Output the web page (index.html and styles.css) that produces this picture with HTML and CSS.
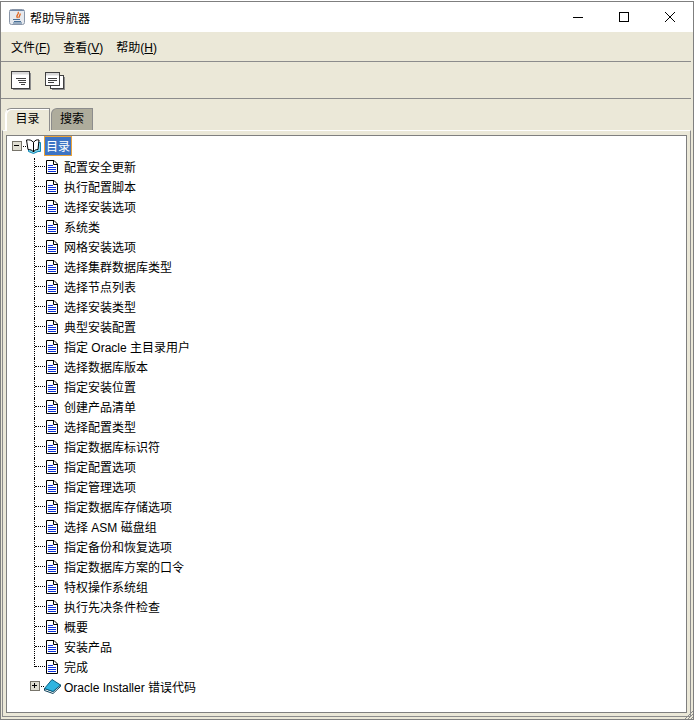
FILE: index.html
```html
<!DOCTYPE html>
<html lang="zh-CN">
<head>
    <meta charset="UTF-8">
    <title>帮助导航器</title>
    <link rel="stylesheet" href="styles.css">
</head>
<body>
    <svg class="defs" width="0" height="0">
        <symbol id="page" viewBox="0 0 12 14">
            <path d="M.5.5H8L11.5 4V13.5H.5Z" fill="#fff" stroke="#000"/>
            <path d="M7.5 .5V4.5H11.5" fill="none" stroke="#000"/>
            <path d="M2 5.500H7M2 7.500H10M2 9.500H10M2 11.500H10" stroke="#0a2fe0"/>
        </symbol>
    </svg>
    <div class="window">
        <div class="titlebar">
            <svg class="app-icon" width="16" height="16" viewBox="0 0 16 16">
                <rect x=".5" y=".5" width="15" height="15" rx="2" fill="#e6e9ee" stroke="#8a96a8"/>
                <path d="M1 1.500H15" stroke="#6f87a8"/>
                <path d="M9 3C11 5 6 6 8.500 9M11 4.500C12 6 9.500 7 10 9" fill="none" stroke="#e0641c" stroke-width="1.300"/>
                <path d="M4 10.500H11M5 12.500H12M4 14H13" fill="none" stroke="#4a7096"/>
            </svg>
            <span class="title">帮助导航器</span>
            <div class="win-buttons">
                <svg width="10" height="10" viewBox="0 0 10 10"><path d="M0 5.500H10" stroke="#000"/></svg>
                <svg width="10" height="10" viewBox="0 0 10 10"><rect x=".5" y=".5" width="9" height="9" fill="none" stroke="#000"/></svg>
                <svg width="10" height="10" viewBox="0 0 10 10"><path d="M0 0L10 10M10 0L0 10" stroke="#000"/></svg>
            </div>
        </div>
        <div class="menubar">
            <span>文件(<u>F</u>)</span>
            <span>查看(<u>V</u>)</span>
            <span>帮助(<u>H</u>)</span>
        </div>
        <div class="toolbar">
            <svg width="20" height="20" viewBox="0 0 20 20">
                <rect x="2" y="3" width="18" height="17" fill="#8d8d8d"/>
                <rect x=".5" y="1.500" width="18" height="17" fill="#fff" stroke="#404040"/>
                <path d="M1 2H18V4.500H1Z" fill="#d8d8d8"/>
                <path d="M5 8.500H15M7 10.500H15M8 12.500H15M10 14.500H14" stroke="#404040"/>
            </svg>
            <svg width="21" height="20" viewBox="0 0 21 20">
                <rect x="7" y="7" width="13" height="13" fill="#8d8d8d"/>
                <rect x="5.500" y="5.500" width="13" height="13" fill="#fff" stroke="#404040"/>
                <rect x=".5" y="2.500" width="14" height="13" fill="#fff" stroke="#404040"/>
                <path d="M1 3H14V5.500H1Z" fill="#d8d8d8"/>
                <path d="M3 8.500H12M3 10.500H12M3 12.500H9" stroke="#404040"/>
            </svg>
        </div>
        <div class="tabs">
            <div class="tab active">目录</div>
            <div class="tab">搜索</div>
        </div>
        <div class="tab-body">
            <div class="tree">
                <div class="root-row">
                    <span class="expander">
                        <svg width="10" height="10" viewBox="0 0 10 10"><rect x=".5" y=".5" width="9" height="9" fill="#e0ded2" stroke="#77746a"/><path d="M2 4.500H7" stroke="#000"/></svg>
                    </span>
                    <svg class="book-icon" width="15" height="15" viewBox="0 0 15 15">
                        <path d="M2.500 3.500V12.500L7.500 14.500L12 12.500H14.500V3.500H12" fill="#7fd6ee" stroke="#1187b5"/>
                        <path d="M7.500 3.500C6 1 3 .5 .5 1L2 10.500C4 10.500 6.500 11 7.500 13C8.500 11 10 10.500 12 10.500L13 1C11 .5 9 1 7.500 3.500Z" fill="#fff" stroke="#000"/>
                        <path d="M7.500 3.500V13" stroke="#000"/>
                    </svg>
                    <span class="selected">目录</span>
                </div>
                <ul class="children">
                    <li><svg><use href="#page"/></svg>配置安全更新</li>
                    <li><svg><use href="#page"/></svg>执行配置脚本</li>
                    <li><svg><use href="#page"/></svg>选择安装选项</li>
                    <li><svg><use href="#page"/></svg>系统类</li>
                    <li><svg><use href="#page"/></svg>网格安装选项</li>
                    <li><svg><use href="#page"/></svg>选择集群数据库类型</li>
                    <li><svg><use href="#page"/></svg>选择节点列表</li>
                    <li><svg><use href="#page"/></svg>选择安装类型</li>
                    <li><svg><use href="#page"/></svg>典型安装配置</li>
                    <li><svg><use href="#page"/></svg>指定 Oracle 主目录用户</li>
                    <li><svg><use href="#page"/></svg>选择数据库版本</li>
                    <li><svg><use href="#page"/></svg>指定安装位置</li>
                    <li><svg><use href="#page"/></svg>创建产品清单</li>
                    <li><svg><use href="#page"/></svg>选择配置类型</li>
                    <li><svg><use href="#page"/></svg>指定数据库标识符</li>
                    <li><svg><use href="#page"/></svg>指定配置选项</li>
                    <li><svg><use href="#page"/></svg>指定管理选项</li>
                    <li><svg><use href="#page"/></svg>指定数据库存储选项</li>
                    <li><svg><use href="#page"/></svg>选择 ASM 磁盘组</li>
                    <li><svg><use href="#page"/></svg>指定备份和恢复选项</li>
                    <li><svg><use href="#page"/></svg>指定数据库方案的口令</li>
                    <li><svg><use href="#page"/></svg>特权操作系统组</li>
                    <li><svg><use href="#page"/></svg>执行先决条件检查</li>
                    <li><svg><use href="#page"/></svg>概要</li>
                    <li><svg><use href="#page"/></svg>安装产品</li>
                    <li class="last-page"><svg><use href="#page"/></svg>完成</li>
                    <li class="folder">
                        <span class="expander">
                            <svg width="10" height="10" viewBox="0 0 10 10"><rect x=".5" y=".5" width="9" height="9" fill="#e0ded2" stroke="#77746a"/><path d="M2 4.500H7M4.500 2V7" stroke="#000"/></svg>
                        </span>
                        <svg class="closed-book" viewBox="0 0 17 15">
                            <path d="M.5 9.500V11.500L9 14.500L16.500 7.500V6L9 12.500Z" fill="#fff" stroke="#0b3f58"/>
                            <path d="M8 .5L16.500 6L9 12.500L.5 9.500Z" fill="#2fb4e0" stroke="#0b5f80"/>
                        </svg>
                        <span class="folder-label">Oracle Installer 错误代码</span>
                    </li>
                </ul>
            </div>
        </div>
        <svg class="grip" width="8" height="8" viewBox="0 0 8 8">
            <path d="M0 8L8 0M3 8L8 3M6 8L8 6" stroke="#8c8c8c"/>
        </svg>
    </div>
</body>
</html>
```

FILE: styles.css
```css
html, body {
    margin: 0;
    height: 100%;
}

body {
    background: #fff;
    font-family: "Liberation Sans", "Noto Sans CJK SC", sans-serif;
    font-size: 12px;
    color: #000;
    overflow: hidden;
}

.defs {
    display: block;
    height: 0;
}

.window {
    position: relative;
    height: 719px;
    margin-top: 1px;
    box-sizing: border-box;
    border: 1px solid #7f7f7f;
    background: #ebe8d8;
    display: flex;
    flex-direction: column;
}

.titlebar {
    height: 30px;
    flex: none;
    background: #fff;
    display: flex;
    align-items: center;
    padding-left: 8px;
}

.app-icon {
    margin-right: 5px;
}

.win-buttons {
    margin-left: auto;
    display: flex;
    gap: 36px;
    padding-right: 18px;
}

.menubar {
    height: 30px;
    flex: none;
    margin-right: 2px;
    box-sizing: border-box;
    border-bottom: 1px solid #8c8c8c;
    display: flex;
    align-items: center;
    gap: 13px;
    padding-left: 10px;
}

.toolbar {
    height: 37px;
    flex: none;
    margin-right: 2px;
    box-sizing: border-box;
    border-bottom: 1px solid #8c8c8c;
    display: flex;
    align-items: center;
    gap: 14px;
    padding-left: 10px;
}

.tabs {
    height: 31px;
    flex: none;
    box-sizing: border-box;
    padding: 9px 0 0 4px;
    display: flex;
    gap: 1px;
}

.tab {
    width: 42px;
    box-sizing: border-box;
    border: 1px solid #8c8c8c;
    border-bottom: 0;
    border-top-left-radius: 6px;
    background: #aeac9c;
    text-align: center;
    line-height: 20px;
}

.tab.active {
    position: relative;
    z-index: 1;
    width: 45px;
    height: 23px;
    background: #ebe8d8;
    border-color: #8c8c8c #8c8c8c #ebe8d8 #fff;
    box-shadow: inset 1px 1px 0 #fff;
}

.tab-body {
    flex: 1;
    margin: 0 2px 2px 1px;
    box-sizing: border-box;
    border: 1px solid;
    border-color: #fff #8c8c8c #8c8c8c #8c8c8c;
    padding: 4px 3px 3px 3px;
    display: flex;
}

.tree {
    flex: 1;
    box-sizing: border-box;
    border: 1px solid #7f7f7f;
    background: #fff;
    padding-left: 5px;
}

.root-row {
    height: 20px;
    display: flex;
    align-items: center;
}

.selected {
    margin-left: 3px;
    box-sizing: border-box;
    width: 28px;
    height: 20px;
    padding-left: 1px;
    line-height: 20px;
    background: #3d74c4;
    color: #fff;
    border: 1px solid #e8a33d;
}

.expander {
    display: inline-flex;
    align-items: center;
    width: 14px;
    flex: none;
}

/* dots between the +/- box and the book */
.expander::after {
    content: "";
    width: 3px;
    margin-left: 1px;
    border-top: 1px dotted #000;
}

.children {
    list-style: none;
    margin: 2px 0 0;
    padding: 0 0 0 22px;
}

.children li {
    position: relative;
    height: 20px;
    line-height: 20px;
    padding-left: 29px;
    border-left: 1px dotted #000;
    box-sizing: border-box;
}

/* elbow from the vertical line to the page icon */
.children li::before {
    content: "";
    position: absolute;
    left: 0;
    top: 8px;
    width: 10px;
    border-top: 1px dotted #000;
}

.children li > svg {
    position: absolute;
    left: 11px;
    top: 2px;
    width: 12px;
    height: 14px;
}

/* the vertical line stops at the last elbow */
.children li.last-page {
    border-left-color: transparent;
}

.children li.last-page::after {
    content: "";
    position: absolute;
    left: -1px;
    top: 0;
    height: 9px;
    border-left: 1px dotted #000;
}

.children li.folder {
    border-left: 0;
    padding-left: 1px;
    display: flex;
    margin-left: -5px;
}

.children li.folder::before {
    content: none;
}

.folder .expander {
    height: 10px;
    margin-top: 3px;
}

.children li.folder > .closed-book {
    position: static;
    width: 17px;
    height: 15px;
    margin: 1px 3px 0 0;
    flex: none;
}

.grip {
    position: absolute;
    right: 0;
    bottom: 0;
}
```
